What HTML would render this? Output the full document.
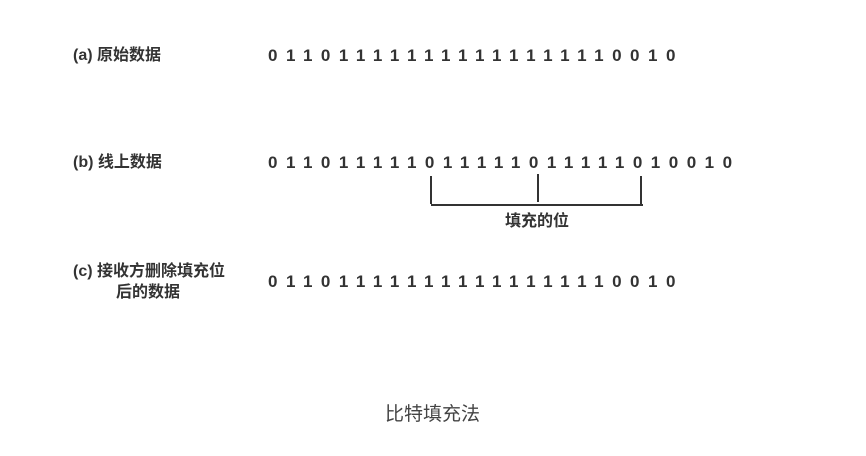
<!DOCTYPE html>
<html><head><meta charset="utf-8"><style>
body{margin:0;width:866px;height:456px;background:#fff;position:relative;font-family:"Liberation Sans","Noto Sans CJK SC",sans-serif;color:#333;overflow:hidden}
.l{position:absolute;font-size:16px;font-weight:bold;line-height:20px}
.d{position:absolute;left:268px;font-size:17px;font-weight:bold;letter-spacing:8.5px;line-height:20px;color:#333}
.v{position:absolute;width:2px;background:#333}
</style></head><body>
<div class="l" style="left:73px;top:46px">(a) 原始数据</div>
<div class="d" style="top:46px">011011111111111111110010</div>
<div class="l" style="left:73px;top:153px">(b) 线上数据</div>
<div class="d" style="top:153px">011011111011111011111010010</div>
<div class="v" style="left:430px;top:176px;height:28px"></div>
<div class="v" style="left:537px;top:174px;height:28px"></div>
<div class="v" style="left:640px;top:176px;height:28px"></div>
<div style="position:absolute;left:431px;top:204px;width:212px;height:2px;background:#333"></div>
<div class="l" style="left:505px;top:212px">填充的位</div>
<div class="l" style="left:73px;top:262px">(c) 接收方删除填充位</div>
<div class="l" style="left:116px;top:283px">后的数据</div>
<div class="d" style="top:272px">011011111111111111110010</div>
<div style="position:absolute;left:385px;top:399px;font-size:19px;color:#444">比特填充法</div>
</body></html>
